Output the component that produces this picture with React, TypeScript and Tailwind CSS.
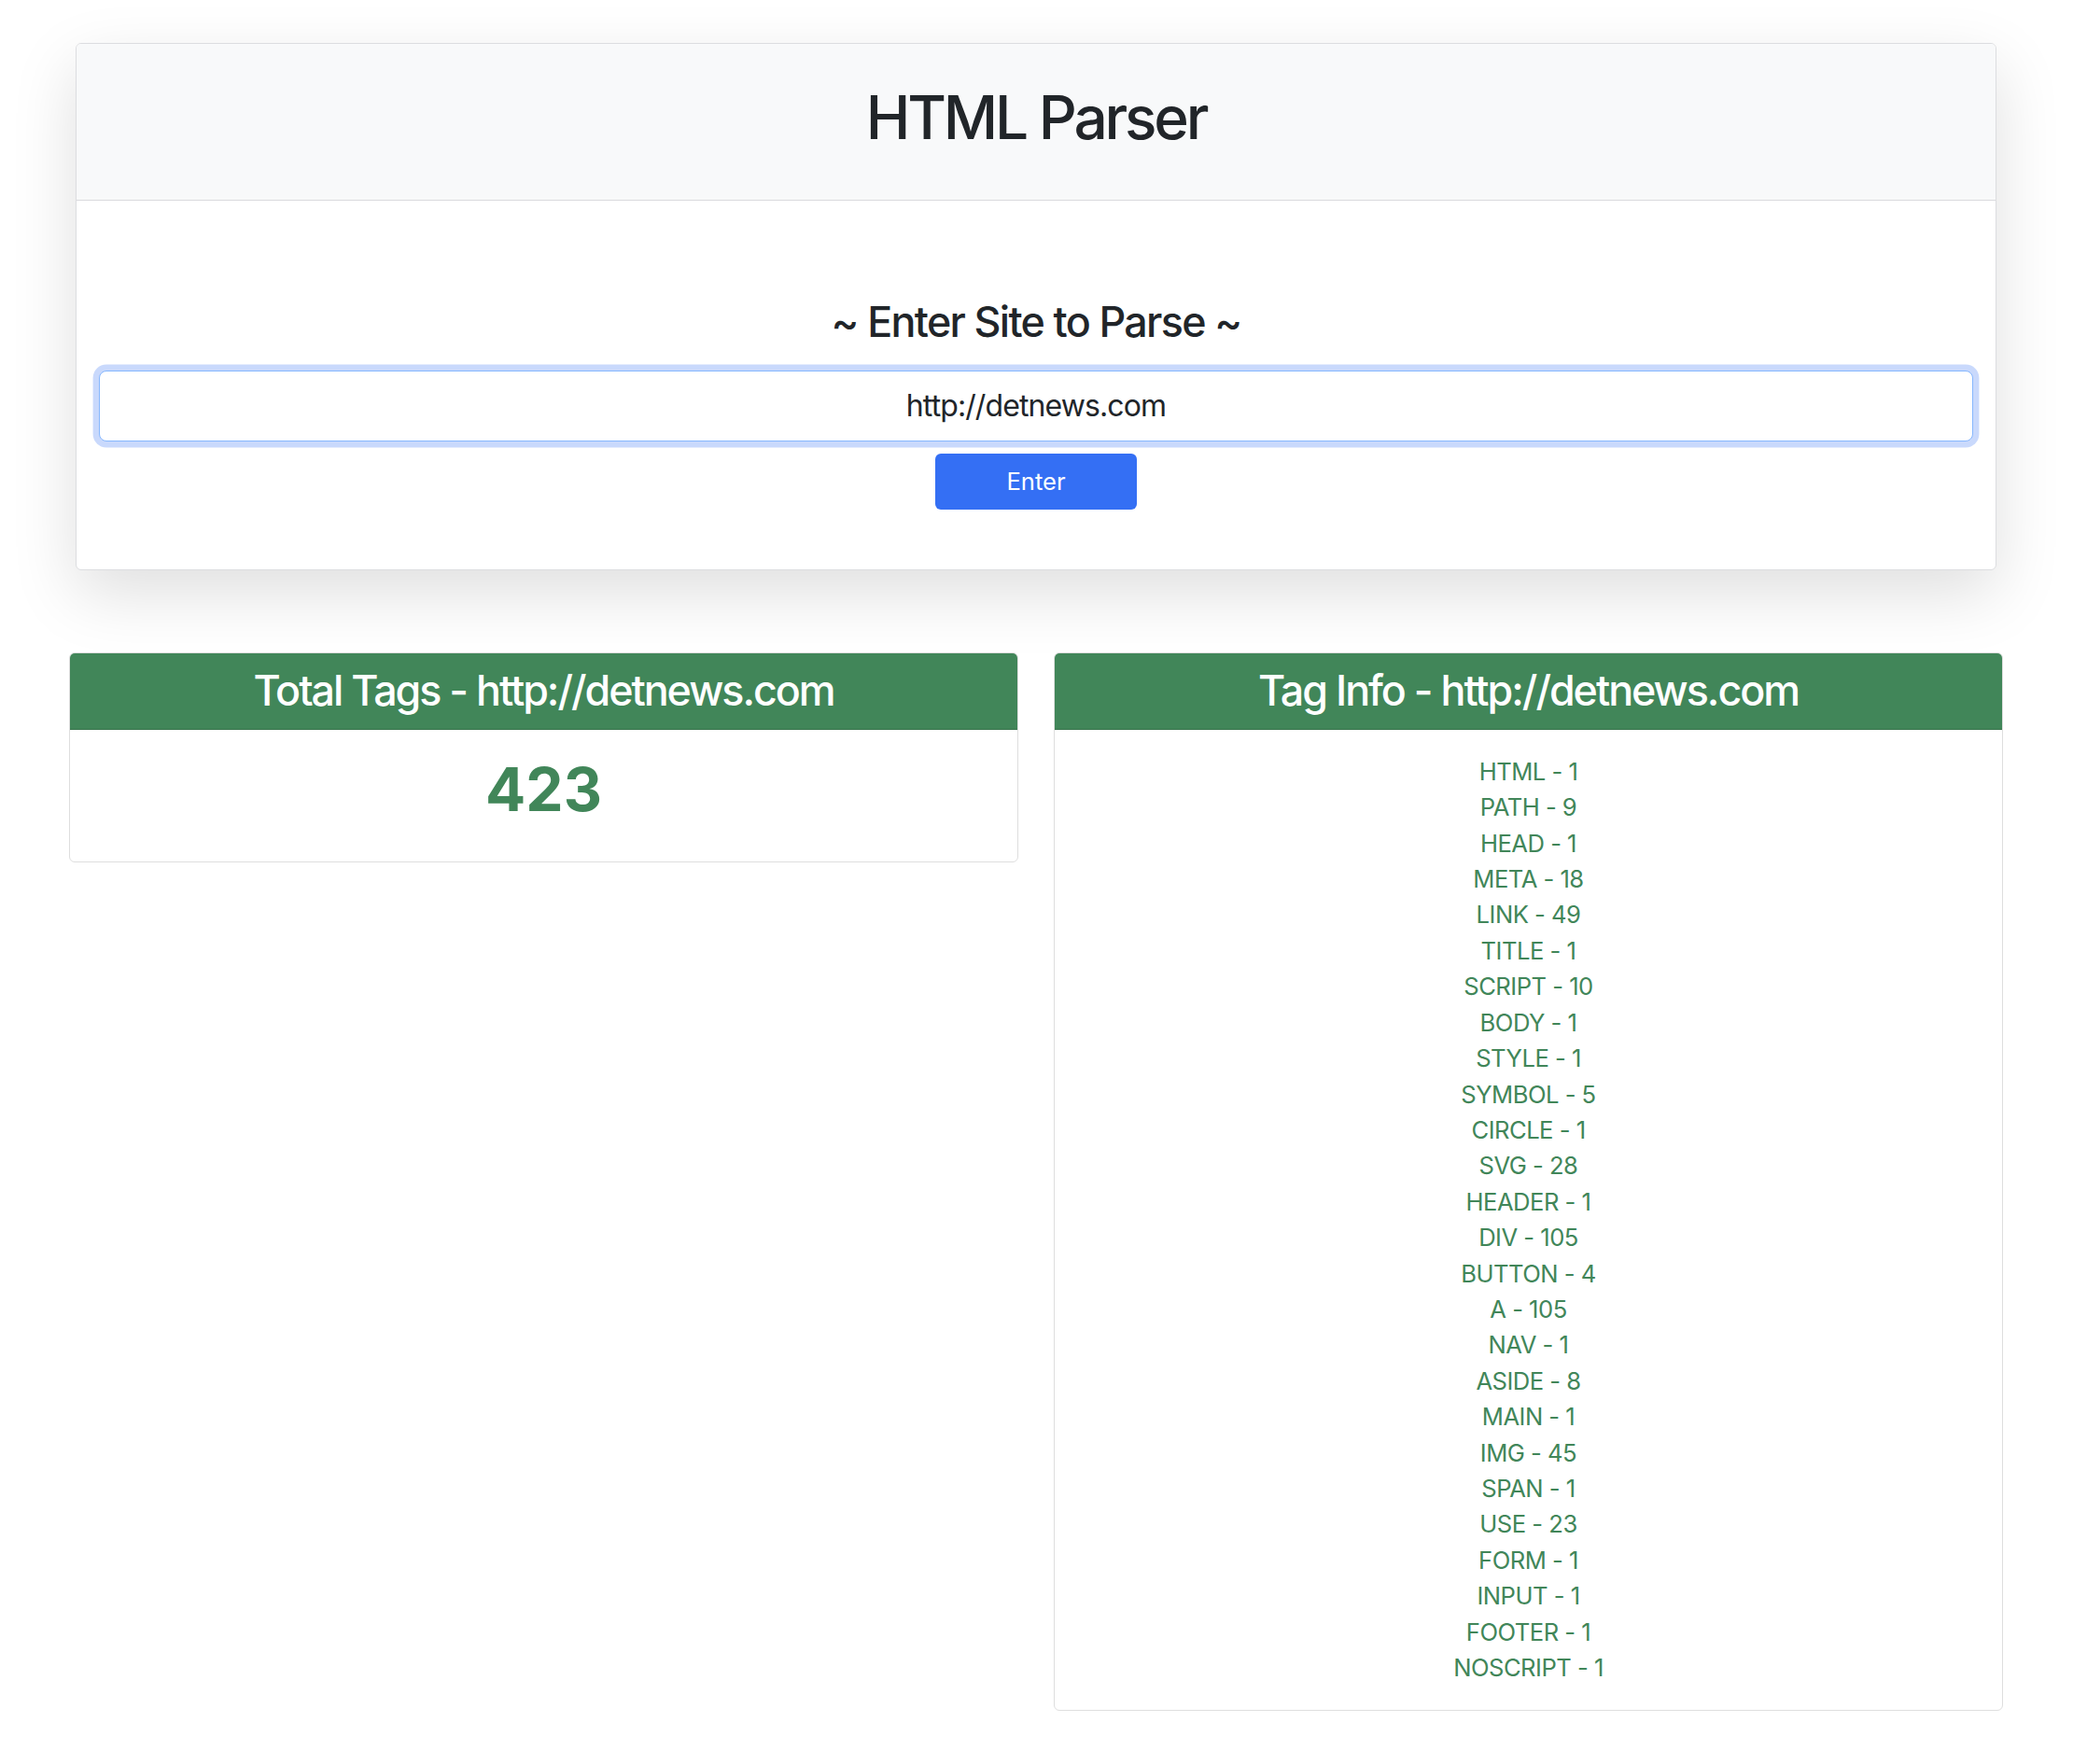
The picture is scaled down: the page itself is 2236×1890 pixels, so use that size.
import React, { useState } from "react";

const tags: [string, number][] = [
  ["HTML", 1],
  ["PATH", 9],
  ["HEAD", 1],
  ["META", 18],
  ["LINK", 49],
  ["TITLE", 1],
  ["SCRIPT", 10],
  ["BODY", 1],
  ["STYLE", 1],
  ["SYMBOL", 5],
  ["CIRCLE", 1],
  ["SVG", 28],
  ["HEADER", 1],
  ["DIV", 105],
  ["BUTTON", 4],
  ["A", 105],
  ["NAV", 1],
  ["ASIDE", 8],
  ["MAIN", 1],
  ["IMG", 45],
  ["SPAN", 1],
  ["USE", 23],
  ["FORM", 1],
  ["INPUT", 1],
  ["FOOTER", 1],
  ["NOSCRIPT", 1],
];

const ResultCard = ({
  title,
  children,
}: {
  title: string;
  children: React.ReactNode;
}) => (
  <div className="flex flex-col self-start overflow-hidden rounded-[6px] border border-[#dedede] bg-white">
    <div className="border-b border-black/15 bg-[#418659] px-[25px] pt-[14px] pb-[13.5px] text-center">
      <h3 className="m-0 text-[44.8px] leading-[1.2] font-medium tracking-[-0.045em] text-white">
        {title}
      </h3>
    </div>
    <div className="p-[25.6px] text-center">{children}</div>
  </div>
);

const App = () => {
  const [site, setSite] = useState("http://detnews.com");

  return (
    <div className="min-h-[1890px] w-[2220px] bg-white pt-[46px] font-['Inter',sans-serif] text-[25.6px] text-[#212529]">
      <div className="mx-[81px] overflow-hidden rounded-[6px] border border-[#dcdde0] bg-white shadow-[0_25px_70px_rgba(0,0,0,0.13)]">
        <div className="flex h-[168px] items-center justify-center border-b border-[#d9dadd] bg-[#f8f9fa] pb-[8px]">
          <h1 className="text-[64px] leading-[1.2] font-medium tracking-[-0.05em]">
            HTML Parser
          </h1>
        </div>
        <div className="flex h-[395px] flex-col items-center px-[24px] pt-[104px]">
          <h3 className="text-[44.8px] leading-[1.2] font-medium tracking-[-0.037em]">
            ~ Enter Site to Parse ~
          </h3>
          <input
            value={site}
            onChange={(e) => setSite(e.target.value)}
            className="mt-[24px] h-[76px] w-full rounded-[8px] border border-[#86b7fe] bg-white px-[25px] text-center text-[32px] tracking-[-0.028em] text-[#212529] shadow-[0_0_0_6.4px_#c9d9fc] outline-none"
          />
          <button className="mt-[13px] h-[60px] w-[216px] rounded-[6px] bg-[#346ff4] text-[25.6px] text-white">
            Enter
          </button>
        </div>
      </div>

      <div className="mt-[88px] grid grid-cols-2 gap-[38px] px-[74px]">
        <ResultCard title={`Total Tags - ${site}`}>
          <div className="mb-[12.8px] text-[64px] leading-[1.2] font-bold text-[#418659]">
            423
          </div>
        </ResultCard>
        <ResultCard title={`Tag Info - ${site}`}>
          <div className="flex flex-col tracking-[-0.02em] text-[#418659]">
            {tags.map(([name, count]) => (
              <span key={name} className="leading-[38.4px]">
                {name} - {count}
              </span>
            ))}
          </div>
        </ResultCard>
      </div>
    </div>
  );
};

export default App;
